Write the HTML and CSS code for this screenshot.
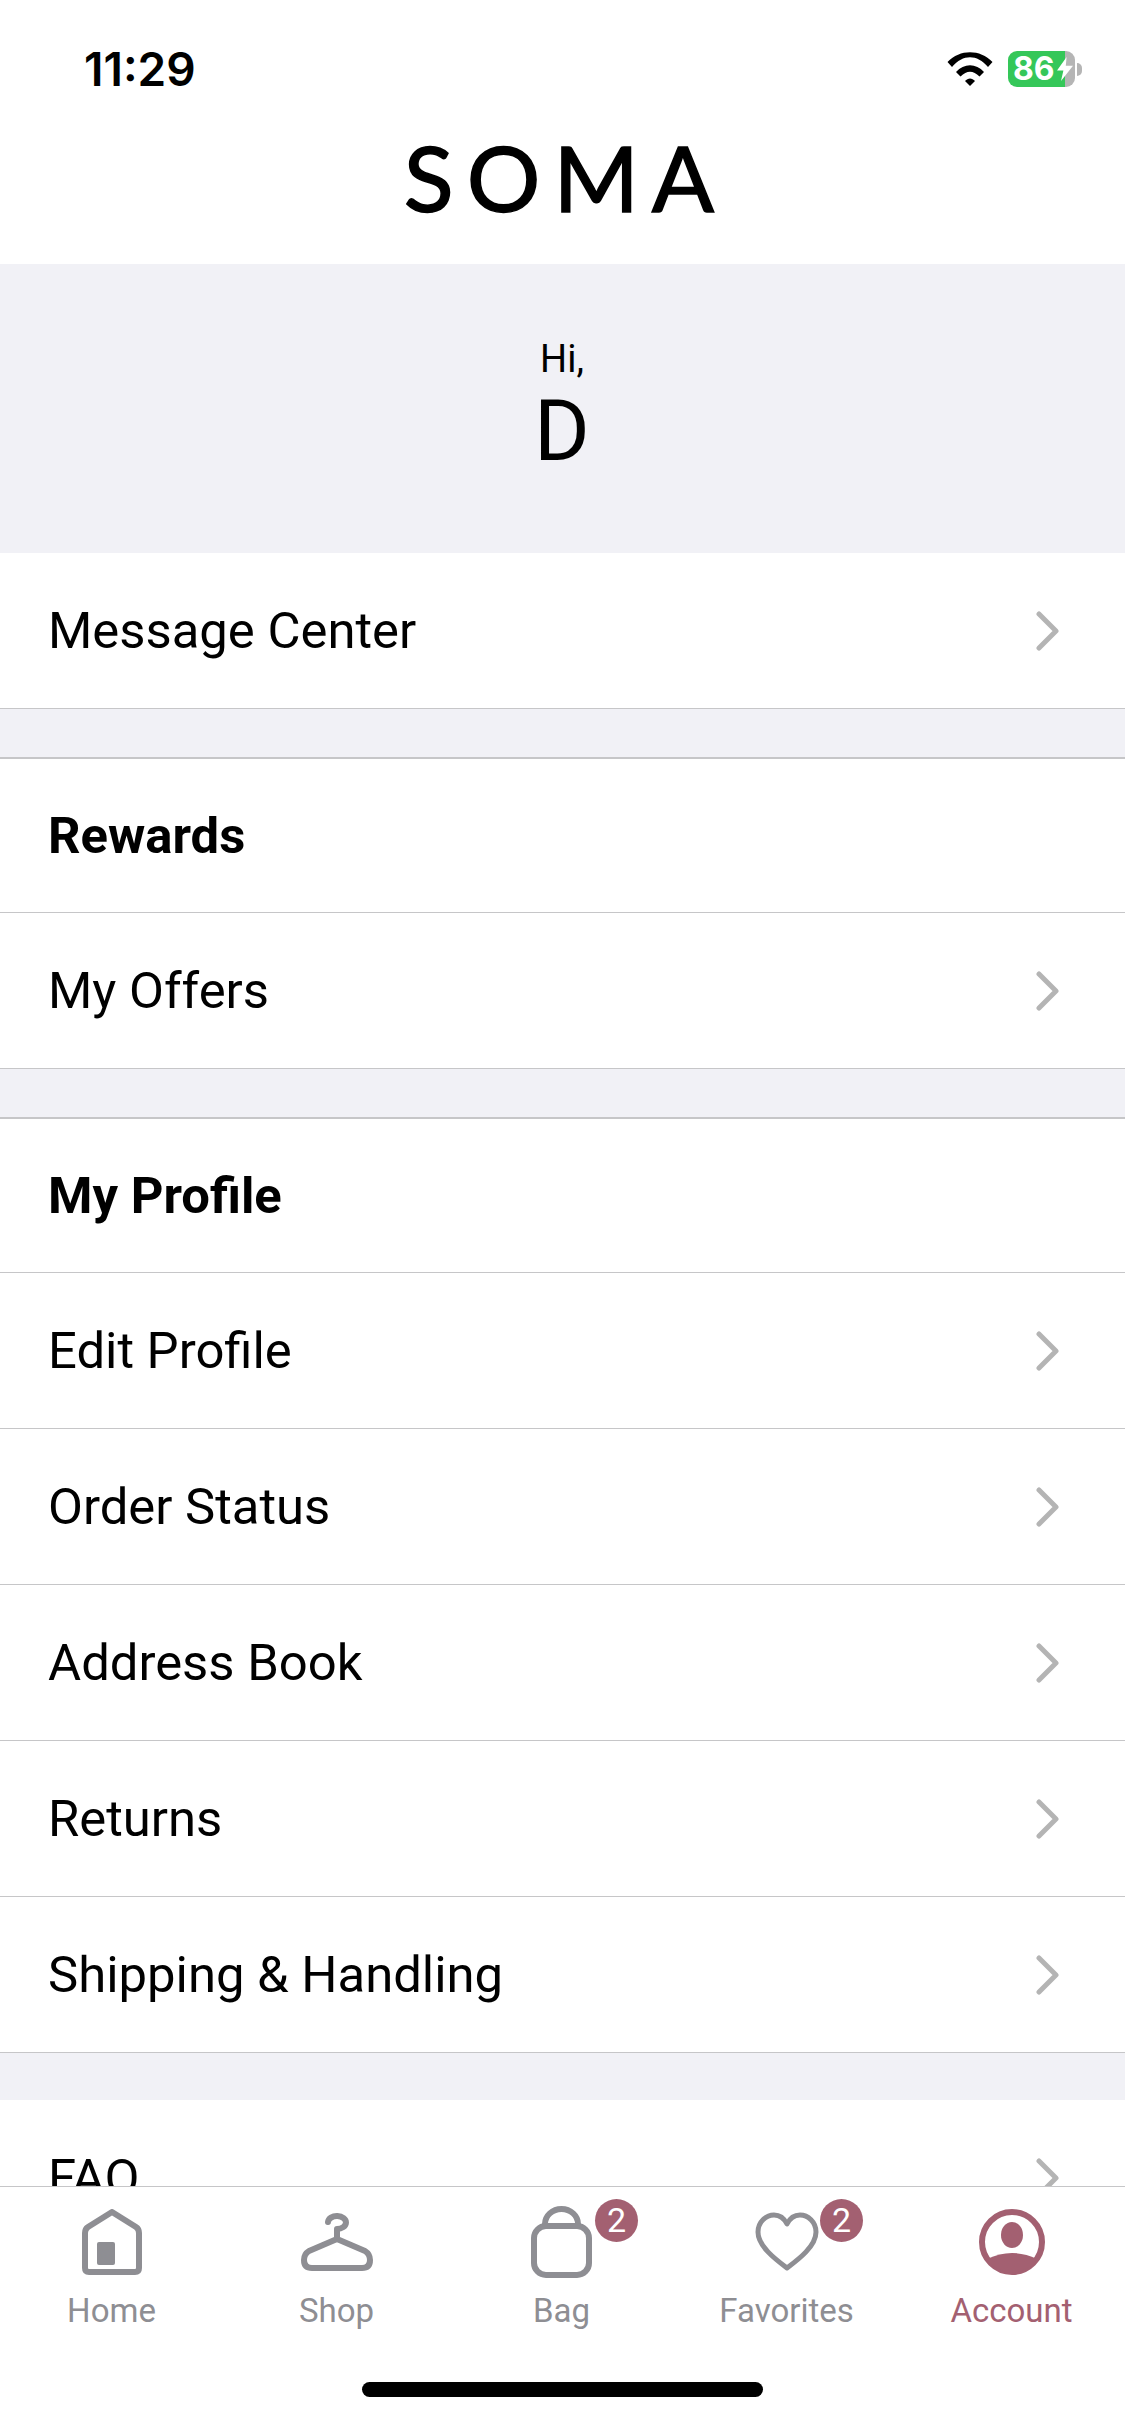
FILE: index.html
```html
<!DOCTYPE html>
<html lang="en">
<head>
    <meta charset="UTF-8">
    <meta name="viewport" content="width=device-width, initial-scale=1.0">
    <title>Account</title>
    <link rel="stylesheet" href="styles.css">
</head>
<body>
    <div class="screen">
        <header class="top">
            <div class="status">
                <span class="time">11:29</span>
                <div class="status-icons">
                    <svg class="wifi" width="46" height="34" viewBox="0 0 46 34">
                        <path d="M0.5 10 C13 -3 33 -3 45.500 10 L41 15 C30 2 16 2 5 15 Z" />
                        <path d="M9 20 C17 11 29 11 37 20 L32.500 24.500 C26 18 20 18 13.500 24.500 Z" />
                        <path d="M18 29 C21 25.500 25 25.500 28 29 L23 34 Z" />
                    </svg>
                    <div class="battery">
                        <span class="battery-num">86</span>
                        <svg class="bolt" width="16" height="24" viewBox="0 0 20 30">
                            <path d="M12 0 L0 17 H8 L5 30 L20 11 H11 Z" />
                        </svg>
                    </div>
                    <span class="battery-nub"></span>
                </div>
            </div>
            <div class="logo">SOMA</div>
        </header>

        <main class="content">
            <section class="hero">
                <div class="hero-hi">Hi,</div>
                <div class="hero-name">D</div>
            </section>

            <div class="row">
                <span>Message Center</span>
                <svg class="chevron" width="23" height="40" viewBox="0 0 23 40"><path d="M3 3 L20 20 L3 37" /></svg>
            </div>

            <div class="gap"></div>

            <div class="row row-head"><span>Rewards</span></div>
            <div class="row">
                <span>My Offers</span>
                <svg class="chevron" width="23" height="40" viewBox="0 0 23 40"><path d="M3 3 L20 20 L3 37" /></svg>
            </div>

            <div class="gap"></div>

            <div class="row row-head"><span>My Profile</span></div>
            <div class="row">
                <span>Edit Profile</span>
                <svg class="chevron" width="23" height="40" viewBox="0 0 23 40"><path d="M3 3 L20 20 L3 37" /></svg>
            </div>
            <div class="row">
                <span>Order Status</span>
                <svg class="chevron" width="23" height="40" viewBox="0 0 23 40"><path d="M3 3 L20 20 L3 37" /></svg>
            </div>
            <div class="row">
                <span>Address Book</span>
                <svg class="chevron" width="23" height="40" viewBox="0 0 23 40"><path d="M3 3 L20 20 L3 37" /></svg>
            </div>
            <div class="row">
                <span>Returns</span>
                <svg class="chevron" width="23" height="40" viewBox="0 0 23 40"><path d="M3 3 L20 20 L3 37" /></svg>
            </div>
            <div class="row">
                <span>Shipping &amp; Handling</span>
                <svg class="chevron" width="23" height="40" viewBox="0 0 23 40"><path d="M3 3 L20 20 L3 37" /></svg>
            </div>

            <div class="gap gap-plain"></div>

            <div class="row">
                <span>FAQ</span>
                <svg class="chevron" width="23" height="40" viewBox="0 0 23 40"><path d="M3 3 L20 20 L3 37" /></svg>
            </div>
        </main>

        <nav class="tabs">
            <div class="tab-list">
                <div class="tab">
                    <div class="tab-icon">
                        <svg class="line" width="60" height="66" viewBox="0 0 60 66">
                            <path d="M30 3 L54 18 Q57 20 57 24 V59 Q57 63 53 63 H7 Q3 63 3 59 V24 Q3 20 6 18 Z" />
                            <rect class="solid" x="15" y="33" width="18" height="23" rx="2" />
                        </svg>
                    </div>
                    <span class="tab-label">Home</span>
                </div>
                <div class="tab">
                    <div class="tab-icon">
                        <svg class="line" width="72" height="58" viewBox="0 0 72 58">
                            <path d="M27 9 A9 6.500 0 1 1 36 16 V26" />
                            <path d="M36 26 L64 38 Q69 41 69 47 Q69 55 61 55 H11 Q3 55 3 47 Q3 41 8 38 Z" />
                        </svg>
                    </div>
                    <span class="tab-label">Shop</span>
                </div>
                <div class="tab">
                    <div class="tab-icon">
                        <svg class="line" width="61" height="72" viewBox="0 0 61 72">
                            <path d="M14 20 V18 A16.500 15 0 0 1 47 18 V20" />
                            <rect x="3" y="20" width="55" height="49" rx="12" />
                        </svg>
                    </div>
                    <span class="tab-label">Bag</span>
                    <span class="badge">2</span>
                </div>
                <div class="tab">
                    <div class="tab-icon">
                        <svg class="line line-thin" width="64" height="60" viewBox="0 0 64 60">
                            <path d="M32 56 C20 47 3 34 3 20 C3 10 11 3 19 3 C25 3 29 6 32 12 C35 6 39 3 45 3 C53 3 61 10 61 20 C61 34 44 47 32 56 Z" />
                        </svg>
                    </div>
                    <span class="tab-label">Favorites</span>
                    <span class="badge">2</span>
                </div>
                <div class="tab tab-active">
                    <div class="tab-icon">
                        <svg width="66" height="66" viewBox="0 0 66 66">
                            <circle class="acc-ring" cx="33" cy="33" r="30" />
                            <ellipse class="acc-fill" cx="33" cy="26" rx="11" ry="13" />
                            <path class="acc-fill" d="M8 50 Q33 38 58 50 A30 30 0 0 1 8 50 Z" />
                        </svg>
                    </div>
                    <span class="tab-label">Account</span>
                </div>
            </div>
            <div class="home-bar"></div>
        </nav>
    </div>
</body>
</html>
```

FILE: styles.css
```css
* {
    box-sizing: border-box;
}
html, body {
    margin: 0;
    padding: 0;
}
body {
    font-family: Roboto, Arial, sans-serif;
    color: #000;
    background-color: #fff;
}
.screen {
    width: 1125px;
    height: 2436px;
    display: flex;
    flex-direction: column;
    overflow: hidden;
}

/* status bar + logo */
.top {
    height: 264px;
    flex-shrink: 0;
    background: #fff;
}
.status {
    height: 104px;
    padding: 49px 43px 0 84px;
    display: flex;
    justify-content: space-between;
    align-items: flex-start;
}
.time {
    font-family: Inter, Arial, sans-serif;
    font-size: 46px;
    font-weight: 600;
    line-height: 40px;
}
.status-icons {
    display: flex;
    align-items: center;
    margin-top: 2px;
}
.wifi {
    fill: #000;
    margin-right: 15px;
}
.battery {
    width: 67px;
    height: 36px;
    border-radius: 9px;
    background: linear-gradient(90deg, #35c759 0, #35c759 57px, #b5b5b5 57px);
    display: flex;
    align-items: center;
    padding-left: 5px;
}
.battery-num {
    font-family: Inter, Arial, sans-serif;
    font-size: 32px;
    font-weight: 700;
    line-height: 36px;
    color: #fff;
}
.bolt {
    fill: #fff;
    margin-left: 2px;
    flex-shrink: 0;
}
.battery-nub {
    width: 5px;
    height: 13px;
    margin-left: 2px;
    border-radius: 0 7px 7px 0;
    background: #b5b5b5;
}
.logo {
    font-family: Lato, Arial, sans-serif;
    font-size: 92px;
    line-height: 66px;
    letter-spacing: 13px;
    margin-top: 40px;
    padding-left: 6px;
    text-align: center;
    -webkit-text-stroke: 1.5px #000;
}

/* scrolling list */
.content {
    flex: 1;
    min-height: 0;
    overflow: hidden;
    background: #f1f1f6;
}
.hero {
    height: 289px;
    text-align: center;
}
.hero-hi {
    font-size: 38px;
    line-height: 44px;
    padding-top: 73px;
    padding-right: 1px;
}
.hero-name {
    font-size: 85px;
    line-height: 100px;
    padding-right: 1px;
}
.row {
    height: 156px;
    padding: 0 66px 0 48px;
    display: flex;
    justify-content: space-between;
    align-items: center;
    background: #fff;
    border-bottom: 1px solid #c6c6c8;
    font-size: 50.8px;
}
.row-head {
    height: 154px;
    font-weight: 700;
}
.chevron {
    fill: none;
    stroke: #b4b4b4;
    stroke-width: 5;
    stroke-linecap: round;
    stroke-linejoin: round;
}
.gap {
    height: 50px;
    border-bottom: 2px solid #c6c6c8;
}
.gap-plain {
    height: 47px;
    border-bottom: 0;
}

/* bottom tabs */
.tabs {
    height: 250px;
    flex-shrink: 0;
    background: #fff;
    border-top: 1px solid #c6c6c8;
}
.tab-list {
    display: grid;
    grid-template-columns: repeat(5, 225px);
    margin-left: -1px;
    padding-top: 19px;
}
.tab {
    position: relative;
    display: flex;
    flex-direction: column;
    align-items: center;
    color: #8e8e93;
}
.tab-icon {
    height: 72px;
    display: flex;
    align-items: center;
    justify-content: center;
}
.tab-label {
    font-size: 33px;
    line-height: 40px;
    margin-top: 13px;
}
.tab-active {
    color: #a36071;
}
.line {
    fill: none;
    stroke: #8e8e93;
    stroke-width: 6;
    stroke-linejoin: round;
    stroke-linecap: round;
}
.line-thin {
    stroke-width: 5;
}
.line .solid {
    fill: #8e8e93;
    stroke: none;
}
.acc-ring {
    fill: none;
    stroke: #a36071;
    stroke-width: 6;
}
.acc-fill {
    fill: #a36071;
}
.badge {
    position: absolute;
    top: -7px;
    left: 146px;
    width: 43px;
    height: 43px;
    border-radius: 50%;
    background: #a36071;
    color: #fff;
    font-size: 34px;
    line-height: 43px;
    text-align: center;
}
.home-bar {
    width: 401px;
    height: 15px;
    margin: 51px 0 0 362px;
    border-radius: 8px;
    background: #000;
}
```
